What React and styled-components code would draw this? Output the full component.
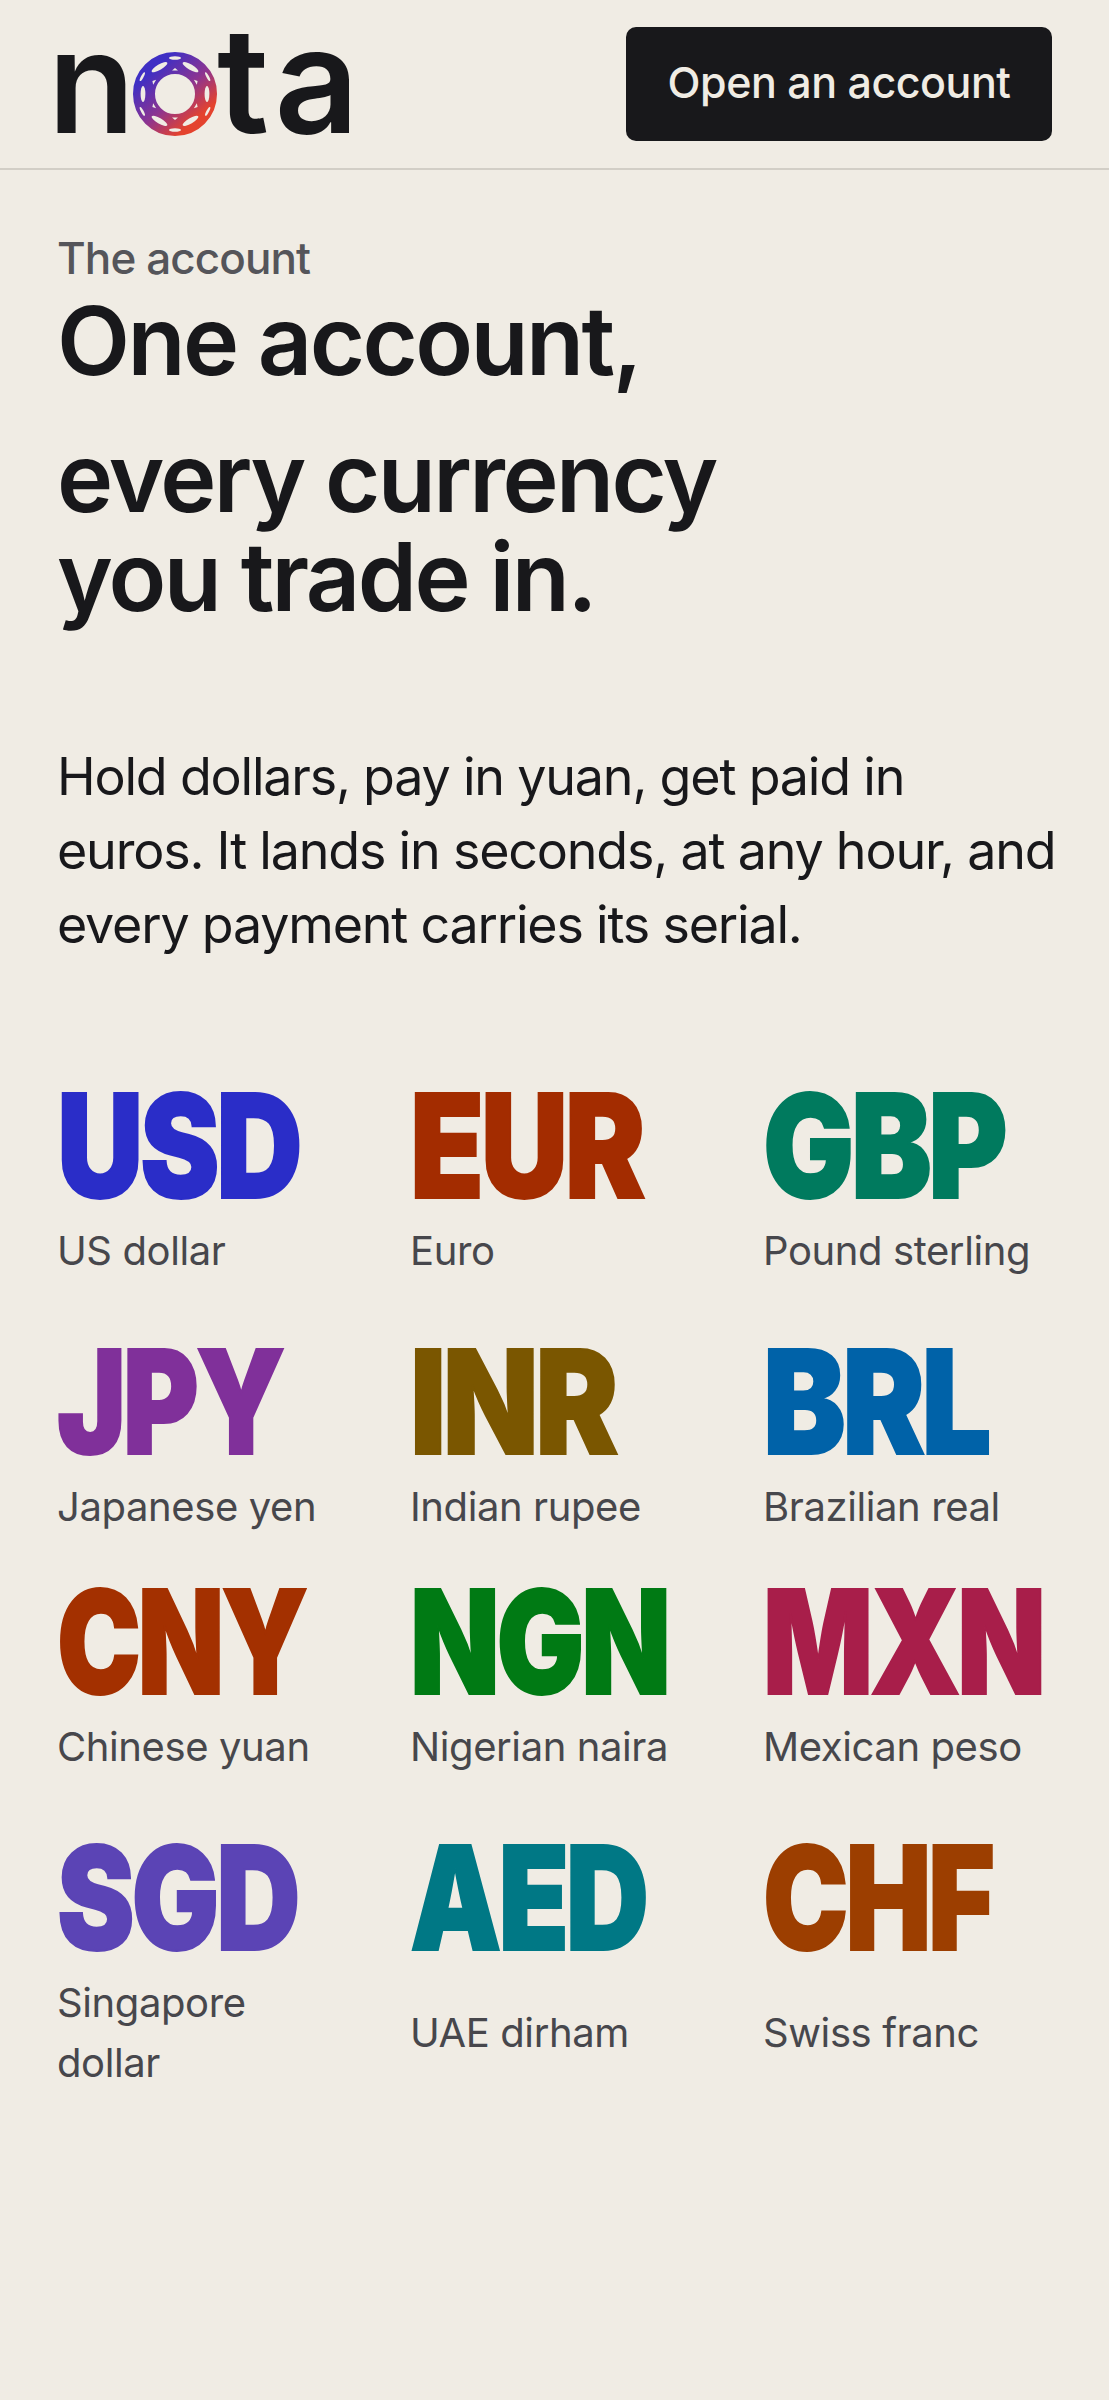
import styled, { createGlobalStyle } from "styled-components";

const GlobalStyle = createGlobalStyle`
  html, body {
    margin: 0;
    background: #f0ece4;
  }
  body {
    font-family: Inter, "Liberation Sans", sans-serif;
    color: #18181b;
  }
`;

const Page = styled.div`
  width: 1109px;
  min-height: 2400px;
`;

const Header = styled.header`
  height: 168px;
  padding: 0 57px;
  display: flex;
  align-items: center;
  justify-content: space-between;
  border-bottom: 2px solid #d2cec6;
`;

const Logo = styled.div`
  display: flex;
  align-items: baseline;
  font-size: 142px;
  line-height: 1;
  font-weight: 600;
  margin: 0 0 9px -9px;
  letter-spacing: -4px;
`;

const LogoTail = styled.span`
  font-size: 147px;
  letter-spacing: 5px;
`;

const LogoRing = styled.svg`
  width: 84px;
  height: 84px;
  margin: 0 0 17px 2px;
  align-self: flex-end;
`;

const OpenButton = styled.a`
  width: 426px;
  height: 114px;
  padding-bottom: 4px;
  box-sizing: border-box;
  background: #18181b;
  color: #f0ece4;
  border-radius: 10px;
  display: flex;
  align-items: center;
  justify-content: center;
  font-size: 43px;
  font-weight: 500;
  letter-spacing: -0.5px;
`;

const Main = styled.main`
  padding: 63px 50px 0 57px;
`;

const Eyebrow = styled.p`
  margin: 0;
  font-size: 44px;
  line-height: 50px;
  font-weight: 500;
  color: #55555a;
  letter-spacing: -0.9px;
`;

const Heading = styled.h1`
  margin: 8px 0 0;
  font-size: 95px;
  line-height: 99px;
  font-weight: 600;
  letter-spacing: -2.6px;
`;

const HeadingLine = styled.span`
  display: block;
  margin-bottom: ${(p) => p.$gap || 0}px;
`;

const Lead = styled.p`
  margin: 114px 0 0;
  font-size: 52px;
  line-height: 74px;
  font-weight: 400;
  letter-spacing: -1.2px;
`;

const CurrencyGrid = styled.div`
  margin-top: 114px;
  display: grid;
  grid-template-columns: repeat(3, 353px);
`;

const Currency = styled.div`
  display: flex;
  flex-direction: column;
  padding-bottom: ${(p) => p.$after}px;
`;

const Code = styled.div`
  height: 145px;
  font-size: 144px;
  line-height: 140px;
  font-weight: 900;
  letter-spacing: -4px;
  white-space: nowrap;
  color: ${(p) => p.$color};
  -webkit-text-stroke: 2px ${(p) => p.$color};
  transform: scaleX(${(p) => p.$squeeze});
  transform-origin: left center;
`;

const Label = styled.div`
  flex: 1;
  display: flex;
  align-items: center;
  font-size: 40px;
  line-height: 60px;
  letter-spacing: -0.4px;
  color: #47474c;
  width: 290px;
`;

const currencies = [
  ["USD", "US dollar", "#2a2dc8", 0.83, 51],
  ["EUR", "Euro", "#a32c00", 0.84, 51],
  ["GBP", "Pound sterling", "#007a5e", 0.84, 51],
  ["JPY", "Japanese yen", "#80309a", 0.805, 35],
  ["INR", "Indian rupee", "#7a5600", 0.865, 35],
  ["BRL", "Brazilian real", "#0062a8", 0.86, 35],
  ["CNY", "Chinese yuan", "#a33000", 0.78, 51],
  ["NGN", "Nigerian naira", "#007a14", 0.81, 51],
  ["MXN", "Mexican peso", "#a81e4a", 0.8, 51],
  ["SGD", "Singapore dollar", "#5b44b5", 0.81, 0],
  ["AED", "UAE dirham", "#007885", 0.8, 0],
  ["CHF", "Swiss franc", "#9c3e00", 0.795, 0],
];

// the lattice cut out of the ring: [angle, radius, half length, half thickness]
const lenses = [
  [0, 36, 6, 1.7],
  [180, 36, 6, 1.7],
  [90, 32, 8, 2.4],
  [270, 32, 8, 2.4],
  [30, 31, 9, 2.7],
  [150, 31, 9, 2.7],
  [210, 31, 9, 2.7],
  [330, 31, 9, 2.7],
  [62, 37, 5, 1.3],
  [118, 37, 5, 1.3],
  [242, 37, 5, 1.3],
  [298, 37, 5, 1.3],
];

const wedges = [0, 60, 120, 180, 240, 300];

const Ring = () => (
  <LogoRing viewBox="0 0 84 84">
    <defs>
      <linearGradient id="ringFill" x1="0.15" y1="0.1" x2="0.85" y2="0.9">
        <stop offset="0" stopColor="#3f2fc4" />
        <stop offset="0.55" stopColor="#8d3490" />
        <stop offset="1" stopColor="#e4432e" />
      </linearGradient>
    </defs>
    <circle cx="42" cy="42" r="31" fill="none" stroke="url(#ringFill)" strokeWidth="22" />
    {lenses.map(([deg, r, rx, ry]) => (
      <ellipse
        key={deg}
        cx="42"
        cy={42 - r}
        rx={rx}
        ry={ry}
        fill="#f0ece4"
        transform={`rotate(${deg} 42 42)`}
      />
    ))}
    {wedges.map((deg) => (
      <path key={deg} d="M39 18.5l3 -2.6l3 2.6z" fill="#f0ece4" transform={`rotate(${deg} 42 42)`} />
    ))}
  </LogoRing>
);

export default function App() {
  return (
    <Page>
      <GlobalStyle />
      <Header>
        <Logo>
          n
          <Ring />
          <LogoTail>ta</LogoTail>
        </Logo>
        <OpenButton>Open an account</OpenButton>
      </Header>
      <Main>
        <Eyebrow>The account</Eyebrow>
        <Heading>
          <HeadingLine $gap={38}>One account,</HeadingLine>
          <HeadingLine>every currency</HeadingLine>
          <HeadingLine>you trade in.</HeadingLine>
        </Heading>
        <Lead>
          Hold dollars, pay in yuan, get paid in euros. It lands in seconds, at
          any hour, and every payment carries its serial.
        </Lead>
        <CurrencyGrid>
          {currencies.map(([code, name, color, squeeze, after]) => (
            <Currency key={code} $after={after}>
              <Code $color={color} $squeeze={squeeze}>{code}</Code>
              <Label>{name}</Label>
            </Currency>
          ))}
        </CurrencyGrid>
      </Main>
    </Page>
  );
}
